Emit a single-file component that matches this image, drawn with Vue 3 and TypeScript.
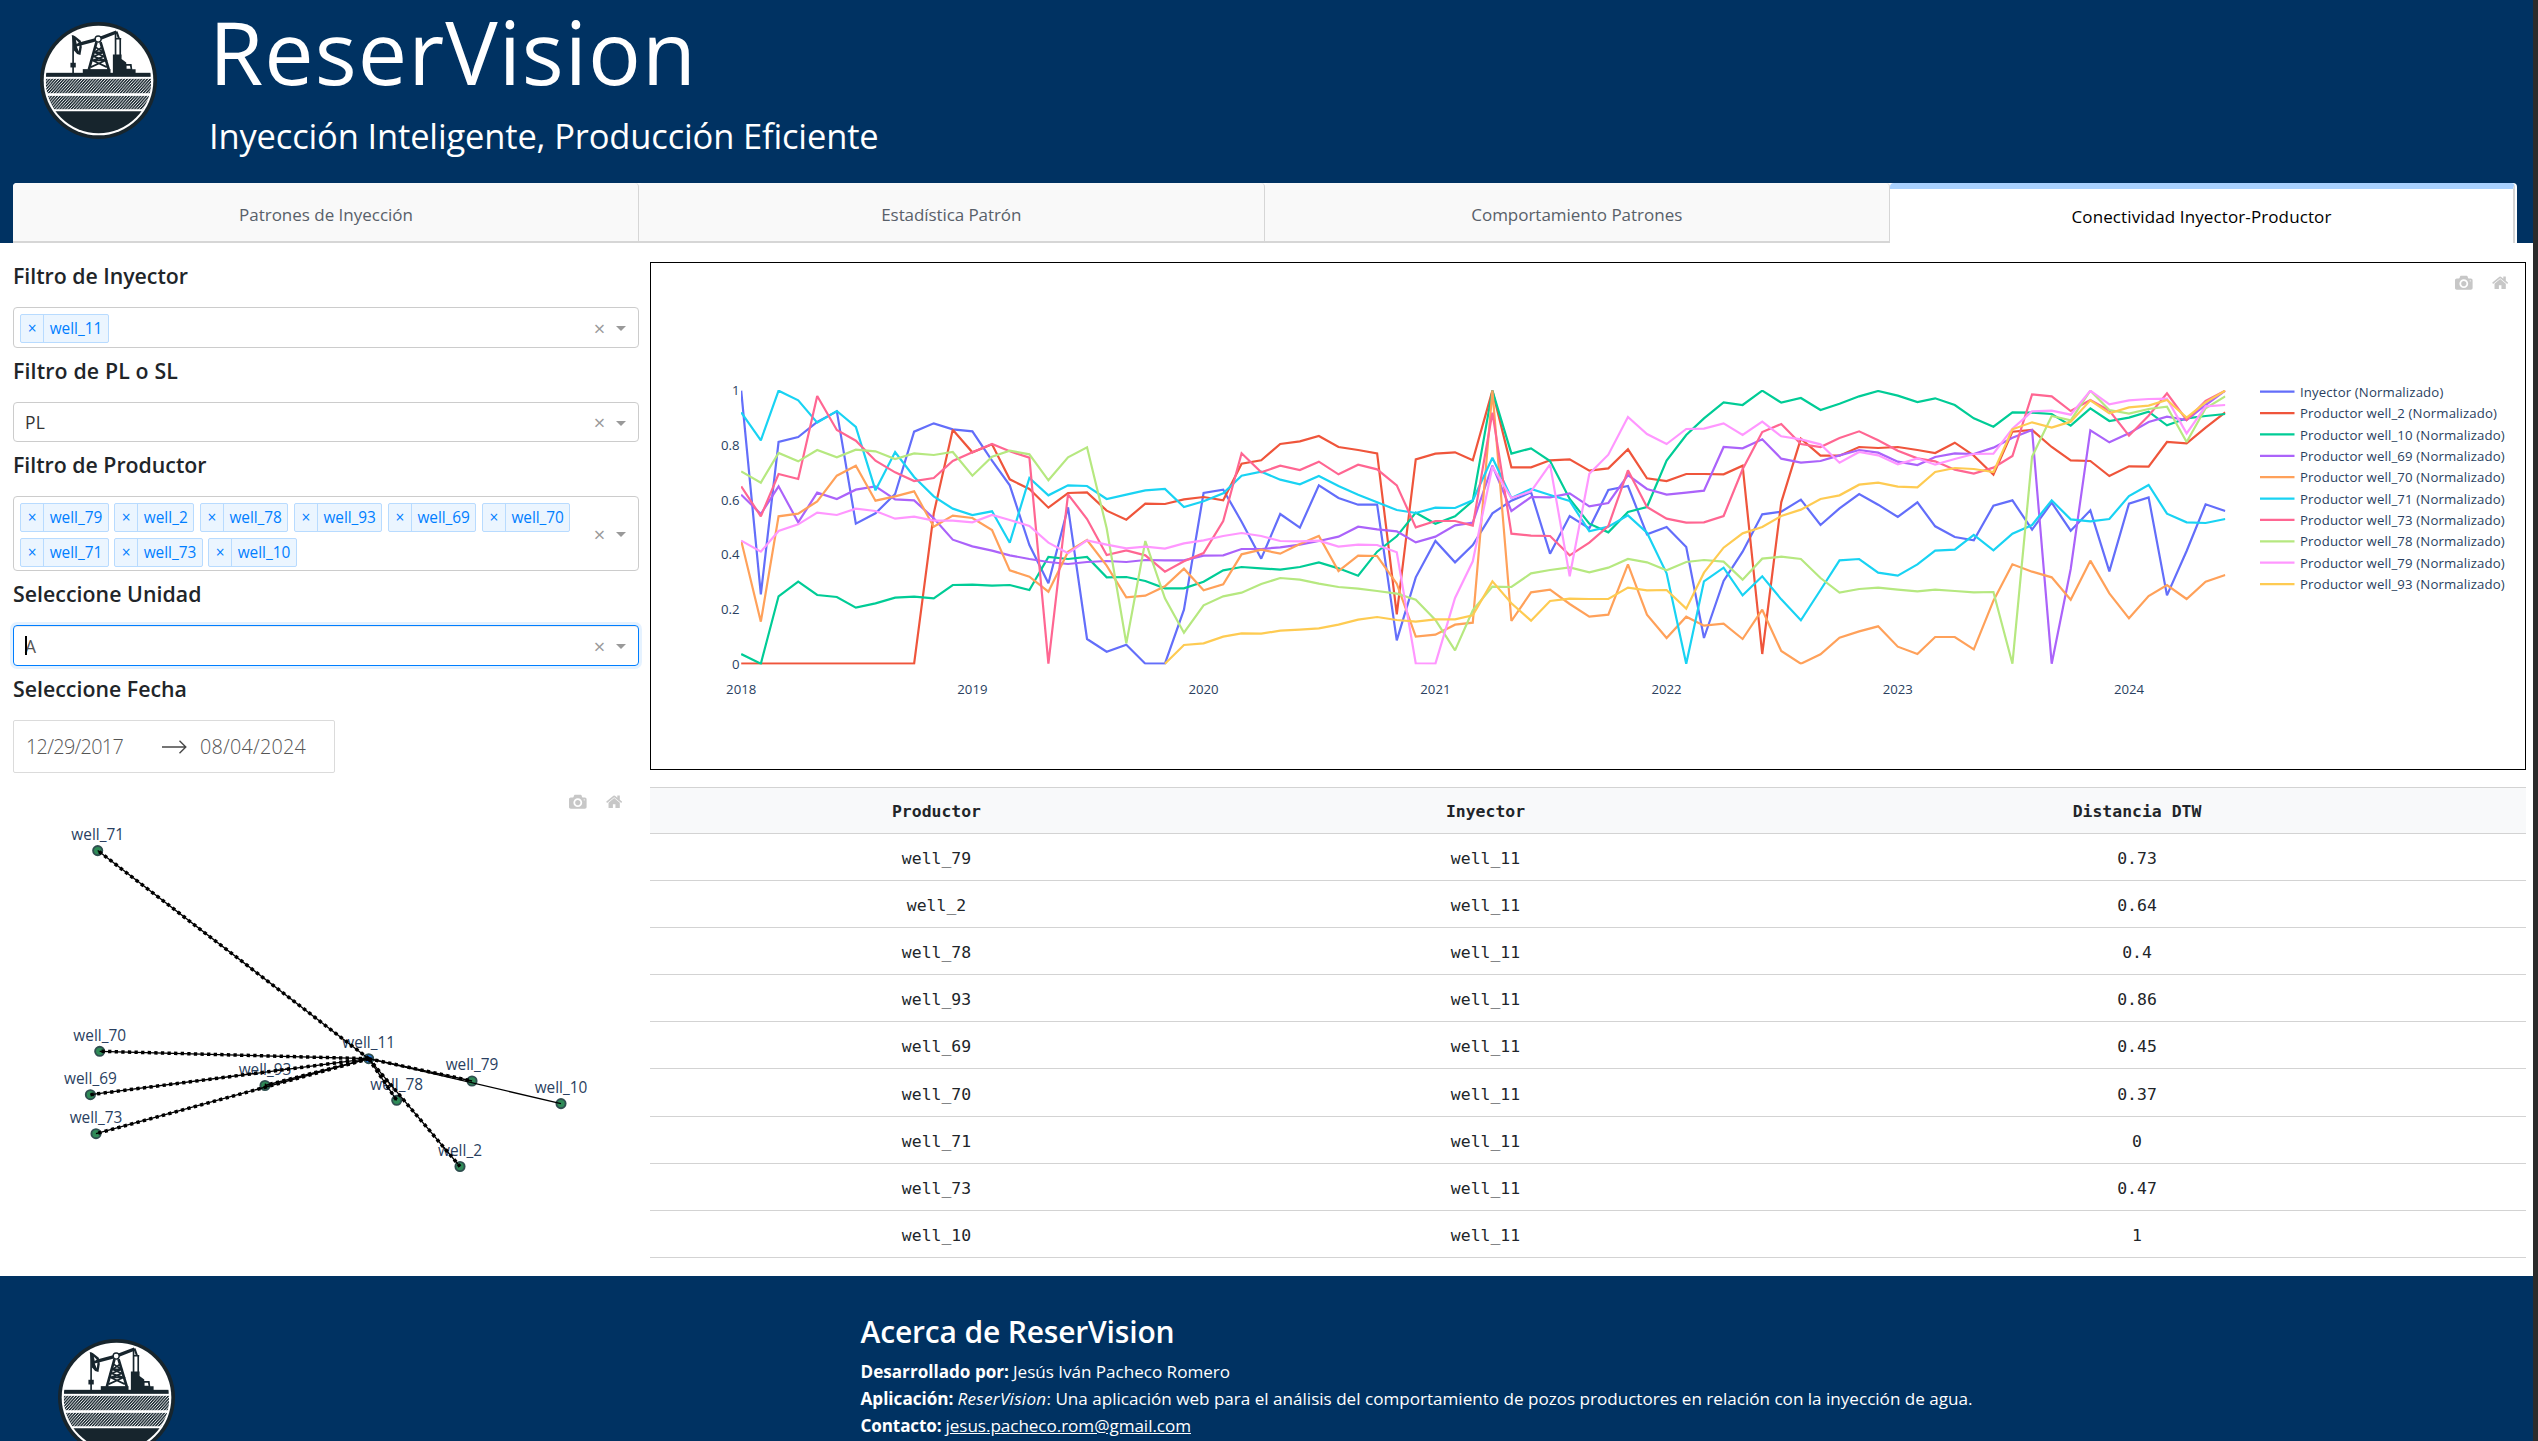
<script setup lang="ts">
import type { Directive } from 'vue'
import { defineComponent, h } from 'vue'

// Tracks a label out (or in) so that it takes the given width in pixels.
const vFit: Directive<HTMLElement, number> = {
  mounted(el, { value }) {
    const natural = el.getBoundingClientRect().width
    const count = (el.textContent ?? '').length
    el.style.letterSpacing = `${(value - natural) / count}px`
  },
}

const CAMERA =
  'm500 450c-83 0-150-67-150-150 0-83 67-150 150-150 83 0 150 67 150 150 0 83-67 150-150 150z m400 150h-120c-16 0-34 13-39 29l-31 93c-6 15-23 28-40 28h-340c-16 0-34-13-39-28l-31-94c-6-15-23-28-40-28h-120c-55 0-100-45-100-100v-450c0-55 45-100 100-100h800c55 0 100 45 100 100v450c0 55-45 100-100 100z m-400-550c-138 0-250 112-250 250 0 138 112 250 250 250 138 0 250-112 250-250 0-138-112-250-250-250z m365 380c-19 0-35 16-35 35 0 19 16 35 35 35 19 0 35-16 35-35 0-19-16-35-35-35z'
const HOME =
  'm786 296v-267q0-15-11-26t-25-10h-214v214h-143v-214h-214q-15 0-25 10t-11 26v267q0 1 0 2t0 2l321 264 321-264q1-1 1-4z m124 39l-34-41q-5-5-12-6h-2q-7 0-12 3l-386 322-386-322q-7-4-13-4-7 2-12 7l-35 41q-4 5-3 13t6 12l401 334q18 15 42 15t43-15l136-114v109q0 8 5 13t13 5h107q8 0 13-5t5-13v-227l122-102q5-5 6-12t-4-13z'

const ModeBar = defineComponent({
  setup: () => () => {
    const icon = (d: string, w: number) =>
      h('svg', { viewBox: `0 0 ${w} 1000`, height: 17.6, width: (17.6 * w) / 1000 }, [
        h('path', { d, transform: 'matrix(1 0 0 -1 0 850)', fill: 'rgba(68,68,68,.3)' }),
      ])
    return h('div', [icon(CAMERA, 1000), icon(HOME, 928.6)])
  },
})

const DARK = '#17252d'
const Logo = defineComponent({
  setup: () => () =>
    h('svg', {
      viewBox: '62 37 350 350',
      width: 117,
      height: 117,
      innerHTML: `
      <defs>
        <clipPath id="disc"><circle cx="237" cy="212" r="158"/></clipPath>
        <pattern id="hatch" width="8.6" height="8.6" patternUnits="userSpaceOnUse" patternTransform="skewX(-42)">
          <rect width="8.6" height="8.6" fill="#e4e7e8"/><rect width="5.2" height="8.6" fill="${DARK}"/>
        </pattern>
      </defs>
      <circle cx="237" cy="212" r="175" fill="${DARK}"/>
      <circle cx="237" cy="212" r="164" fill="#fff"/>
      <g clip-path="url(#disc)">
        <rect x="80" y="189" width="313" height="12" fill="${DARK}"/>
        <rect x="79" y="207" width="315" height="43" fill="url(#hatch)"/>
        <rect x="79" y="258" width="315" height="40" fill="url(#hatch)"/>
        <rect x="70" y="304" width="340" height="80" fill="${DARK}"/>
      </g>
      <g fill="none" stroke="${DARK}">
        <path d="M161 78V190" stroke-width="5"/>
        <path d="M180 103L236 88L291 67" stroke-width="10"/>
        <path d="M231 97L208 180M243 97L268 180" stroke-width="8"/>
        <path d="M228 112L252 128L222 140L258 152L214 172M248 112L225 128L253 140L219 152L262 172M224 128H252M219 152H258" stroke-width="5"/>
        <path d="M288 66V140M302 85V140M286 87H305" stroke-width="5"/>
        <path d="M291 66L298 86" stroke-width="6"/>
        <circle cx="236" cy="88" r="9" fill="#fff" stroke-width="4"/>
      </g>
      <g fill="${DARK}">
        <path d="M157 76L166 79L184 93L187 112L183 136L173 133L164 122Z"/>
        <path d="M169 90L178 98L172 103ZM172 110L180 108L178 125Z" fill="#fff"/>
        <rect x="153" y="159" width="16" height="14"/>
        <path d="M190 190V178H273V190Z"/>
        <path d="M280 190V134H306V148L320 158V163H336L338 178H348V190Z"/>
        <path d="M321 168H331L333 177H321Z" fill="#fff"/>
      </g>`,
    }),
})

const tabs = [
  { label: 'Patrones de Inyección', fit: 174 },
  { label: 'Estadística Patrón', fit: 140 },
  { label: 'Comportamiento Patrones', fit: 211 },
  { label: 'Conectividad Inyector-Productor', fit: 260 },
]

const producers = ['well_79', 'well_2', 'well_78', 'well_93', 'well_69', 'well_70', 'well_71', 'well_73', 'well_10']
const pillFit = (name: string) => (name.length === 6 ? 44.2 : 52.5)

const rows: [string, string][] = [
  ['well_79', '0.73'],
  ['well_2', '0.64'],
  ['well_78', '0.4'],
  ['well_93', '0.86'],
  ['well_69', '0.45'],
  ['well_70', '0.37'],
  ['well_71', '0'],
  ['well_73', '0.47'],
  ['well_10', '1'],
]

interface WellNode { name: string; x: number; y: number }
const hub: WellNode = { name: 'well_11', x: 368.7, y: 1058.7 }
const nodes: WellNode[] = [
  { name: 'well_79', x: 472, y: 1081 },
  { name: 'well_2', x: 460, y: 1166.5 },
  { name: 'well_78', x: 396.7, y: 1100.3 },
  { name: 'well_93', x: 265, y: 1085.5 },
  { name: 'well_69', x: 90.4, y: 1094.7 },
  { name: 'well_70', x: 99.7, y: 1051.3 },
  { name: 'well_71', x: 97.7, y: 850.6 },
  { name: 'well_73', x: 96, y: 1133.7 },
  { name: 'well_10', x: 561, y: 1103.6 },
]

// Monthly samples from January 2018, on a grid where 62 is the value 1 and 881.5 is 0.
interface Series { name: string; color: string; start: number; levels: number[] }
const series: Series[] = [
  { name: 'Inyector (Normalizado)', color: '#636efa', start: 0, levels: [
    62, 673, 216, 201, 156, 124, 461, 430, 372, 185, 160, 178,
    184, 272, 346, 525, 640, 412, 807, 845, 824, 881, 881, 719,
    369, 359, 455, 566, 432, 473, 346, 384, 404, 404, 811, 622,
    513, 577, 525, 430, 392, 367, 551, 438, 475, 360, 348, 493,
    471, 531, 804, 633, 545, 433, 425, 389, 465, 415, 372, 404,
    441, 397, 469, 501, 511, 407, 391, 479, 398, 482, 421, 604,
    401, 382, 676, 543, 403, 423] },
  { name: 'Productor well_2 (Normalizado)', color: '#EF553B', start: 0, levels: [
    881, 881, 881, 881, 881, 881, 881, 881, 881, 881, 430, 179,
    247, 223, 328, 357, 413, 369, 367, 422, 449, 401, 402, 388,
    381, 391, 281, 271, 222, 214, 198, 231, 240, 250, 733, 268,
    251, 247, 271, 62, 292, 292, 271, 268, 302, 295, 238, 325,
    333, 312, 312, 313, 287, 852, 397, 206, 257, 257, 231, 234,
    231, 240, 249, 218, 257, 314, 185, 180, 231, 271, 273, 318,
    289, 290, 216, 220, 173, 127] },
  { name: 'Productor well_10 (Normalizado)', color: '#00cc96', start: 0, levels: [
    852, 881, 679, 635, 675, 681, 713, 700, 683, 680, 685, 645,
    644, 647, 645, 660, 561, 567, 561, 622, 621, 633, 655, 655,
    635, 601, 591, 595, 599, 591, 577, 595, 617, 545, 499, 428,
    461, 439, 393, 62, 251, 235, 273, 387, 461, 487, 426, 411,
    272, 195, 145, 97, 105, 62, 98, 84, 120, 101, 79, 63,
    77, 96, 85, 105, 145, 170, 127, 128, 132, 167, 115, 153,
    143, 125, 166, 145, 138, 132] },
  { name: 'Productor well_69 (Normalizado)', color: '#ab63fa', start: 0, levels: [
    374, 432, 349, 457, 368, 387, 359, 349, 388, 391, 445, 509,
    529, 542, 556, 567, 576, 582, 576, 573, 576, 570, 571, 571,
    557, 556, 537, 537, 532, 524, 513, 500, 470, 478, 484, 517,
    500, 466, 458, 287, 423, 381, 382, 370, 409, 399, 315, 357,
    374, 368, 362, 231, 235, 208, 266, 278, 273, 256, 240, 248,
    275, 285, 261, 250, 252, 233, 203, 180, 881, 597, 181, 217,
    190, 156, 140, 150, 105, 62] },
  { name: 'Productor well_70 (Normalizado)', color: '#FFA15A', start: 0, levels: [
    512, 755, 439, 431, 394, 317, 287, 392, 379, 364, 470, 437,
    444, 480, 601, 620, 665, 545, 510, 587, 682, 677, 649, 596,
    661, 643, 553, 539, 551, 522, 498, 603, 557, 558, 641, 800,
    794, 764, 758, 62, 753, 667, 659, 702, 740, 734, 583, 734,
    804, 740, 767, 761, 807, 719, 843, 881, 853, 803, 784, 769,
    830, 852, 801, 801, 838, 692, 583, 605, 622, 689, 572, 670,
    745, 678, 645, 687, 635, 615] },
  { name: 'Productor well_71 (Normalizado)', color: '#19d3f3', start: 0, levels: [
    127, 211, 62, 91, 158, 123, 171, 361, 246, 321, 379, 416,
    435, 424, 518, 324, 376, 346, 348, 387, 374, 361, 357, 411,
    394, 370, 317, 305, 329, 343, 318, 348, 374, 397, 420, 429,
    413, 414, 391, 263, 384, 357, 375, 393, 484, 470, 436, 488,
    610, 881, 634, 593, 676, 619, 688, 751, 660, 571, 567, 608,
    617, 583, 542, 539, 495, 541, 491, 465, 391, 448, 454, 447,
    378, 345, 431, 457, 459, 447] },
  { name: 'Productor well_73 (Normalizado)', color: '#FF6692', start: 0, levels: [
    349, 439, 312, 327, 78, 180, 212, 272, 307, 333, 324, 273,
    247, 222, 244, 263, 881, 373, 447, 555, 541, 556, 605, 574,
    549, 453, 250, 307, 287, 300, 275, 313, 284, 298, 346, 472,
    453, 453, 467, 128, 491, 497, 498, 556, 518, 468, 301, 411,
    446, 458, 457, 438, 298, 186, 162, 222, 231, 204, 184, 211,
    242, 265, 274, 299, 311, 293, 258, 73, 79, 123, 90, 122,
    197, 137, 70, 150, 93, 62] },
  { name: 'Productor well_78 (Normalizado)', color: '#B6E880', start: 0, levels: [
    304, 338, 249, 274, 240, 262, 239, 244, 267, 250, 255, 246,
    317, 260, 242, 253, 331, 262, 232, 475, 820, 513, 685, 788,
    706, 679, 668, 642, 624, 629, 641, 651, 656, 663, 671, 689,
    750, 841, 721, 650, 651, 610, 600, 592, 607, 593, 567, 577,
    601, 576, 570, 575, 629, 566, 560, 567, 624, 668, 657, 653,
    659, 664, 659, 663, 667, 666, 881, 260, 138, 151, 62, 120,
    131, 117, 110, 216, 115, 79] },
  { name: 'Productor well_79 (Normalizado)', color: '#FF97FF', start: 0, levels: [
    512, 545, 483, 463, 428, 435, 416, 423, 446, 440, 452, 452,
    457, 435, 450, 468, 518, 550, 511, 524, 535, 530, 536, 520,
    511, 498, 489, 498, 513, 514, 512, 530, 524, 525, 547, 880,
    881, 684, 574, 290, 384, 364, 283, 619, 311, 254, 141, 192,
    222, 177, 176, 160, 195, 155, 199, 208, 223, 278, 246, 256,
    283, 265, 284, 267, 252, 251, 176, 124, 122, 134, 62, 103,
    91, 87, 86, 190, 109, 105] },
  { name: 'Productor well_93 (Normalizado)', color: '#FECB52', start: 22, levels: [
    881, 825,
    820, 800, 790, 791, 782, 779, 775, 764, 749, 741, 750, 755,
    748, 748, 736, 634, 700, 752, 693, 686, 687, 687, 653, 661,
    660, 716, 608, 533, 490, 471, 438, 419, 387, 376, 344, 338,
    350, 352, 306, 294, 297, 306, 178, 157, 173, 155, 91, 130,
    112, 107, 90, 143, 97, 62] },
]

const EPOCH = Date.UTC(2018, 0, 1)
const monthX = (m: number): number =>
  741.2 + ((Date.UTC(2018, m, 1) - EPOCH) / 86400000) * 0.6334
const points = (s: Series): string =>
  s.levels.map((v, i) => `${monthX(s.start + i).toFixed(2)},${(370 + v / 3).toFixed(2)}`).join(' ')

const yTicks = ['1', '0.8', '0.6', '0.4', '0.2', '0']
const years = [2018, 2019, 2020, 2021, 2022, 2023, 2024]
const legendFit = (name: string) => (name.startsWith('Iny') ? 143.3 : name.includes('well_2 ') ? 197 : 204.7)
</script>

<template>
  <div class="frame">
    <div class="page">
      <header class="header">
        <div class="brand">
          <Logo class="brand-logo" />
          <div class="brand-text">
            <div class="title"><span v-fit="488">ReserVision</span></div>
            <div class="subtitle"><span v-fit="669.5">Inyección Inteligente, Producción Eficiente</span></div>
          </div>
        </div>
        <nav class="tabs">
          <div v-for="(t, i) in tabs" :key="t.label" class="tab" :class="{ active: i === 3 }">
            <span v-fit="t.fit">{{ t.label }}</span>
          </div>
        </nav>
      </header>

      <main class="main">
        <section class="filters">
          <h5><span v-fit="175">Filtro de Inyector</span></h5>
          <div class="select">
            <div class="pills">
              <div class="pill"><i>×</i><b><span v-fit="52.5">well_11</span></b></div>
            </div>
            <span class="clear">×</span><span class="arrow"></span>
          </div>

          <h5><span v-fit="165">Filtro de PL o SL</span></h5>
          <div class="select short">
            <div class="value"><span v-fit="20">PL</span></div>
            <span class="clear">×</span><span class="arrow"></span>
          </div>

          <h5><span v-fit="193.5">Filtro de Productor</span></h5>
          <div class="select tall">
            <div class="pills">
              <div v-for="p in producers" :key="p" class="pill">
                <i>×</i><b><span v-fit="pillFit(p)">{{ p }}</span></b>
              </div>
            </div>
            <span class="clear">×</span><span class="arrow"></span>
          </div>

          <h5><span v-fit="188.5">Seleccione Unidad</span></h5>
          <div class="select focused">
            <div class="value unit"><u class="caret"></u>A</div>
            <span class="clear">×</span><span class="arrow"></span>
          </div>

          <h5><span v-fit="174">Seleccione Fecha</span></h5>
          <div class="dates">
            <div class="from"><span v-fit="97">12/29/2017</span></div>
            <svg width="26" height="16" viewBox="0 0 26 16">
              <path d="M1 8H24.5M18.5 1.8L24.8 8L18.5 14.2" fill="none" stroke="#484848" stroke-width="1.4" />
            </svg>
            <div class="to"><span v-fit="106">08/04/2024</span></div>
          </div>

          <div class="network">
            <ModeBar class="modebar" />
            <svg width="626" height="440" viewBox="13 773 626 440">
              <g class="node-label" text-anchor="middle">
                <template v-for="n in [...nodes, hub]" :key="n.name">
                  <circle :cx="n.x" :cy="n.y" r="4.6" :fill="n === hub ? '#1e6fd0' : '#2E8B57'" stroke="#2F4F4F" stroke-width="1.9" />
                  <text :x="n.x" :y="n.y - 10.6">{{ n.name }}</text>
                </template>
              </g>
              <g stroke="#000">
                <template v-for="n in nodes" :key="n.name">
                  <line :x1="hub.x" :y1="hub.y" :x2="n.x" :y2="n.y" stroke-width="1.3" />
                  <line v-if="n.name !== 'well_10'" :x1="hub.x" :y1="hub.y" :x2="n.x" :y2="n.y" stroke-width="3.5" stroke-dasharray="3.3 3.3" />
                </template>
              </g>
            </svg>
          </div>
        </section>

        <section class="results">
          <div class="chart">
            <ModeBar class="modebar" />
            <svg width="1874" height="506" viewBox="651 263 1874 506">
              <clipPath id="plot"><rect x="741" y="390" width="1484.5" height="274.6" /></clipPath>
              <g clip-path="url(#plot)" fill="none" stroke-width="2.2">
                <polyline v-for="s in series" :key="s.name" :points="points(s)" :stroke="s.color" stroke-miterlimit="2" />
              </g>
              <g class="axis" text-anchor="end">
                <text v-for="(t, i) in yTicks" :key="t" x="739.5" :y="395.4 + i * 54.62">{{ t }}</text>
              </g>
              <g class="axis" text-anchor="middle">
                <text v-for="(y, i) in years" :key="y" :x="monthX(i * 12)" y="694">{{ y }}</text>
              </g>
              <g class="axis">
                <template v-for="(s, i) in series" :key="s.name">
                  <line x1="2260" x2="2294.5" :y1="391.7 + i * 21.37" :y2="391.7 + i * 21.37" :stroke="s.color" stroke-width="2.2" />
                  <text x="2300" :y="396.8 + i * 21.37" :textLength="legendFit(s.name)">{{ s.name }}</text>
                </template>
              </g>
            </svg>
          </div>

          <table class="grid">
            <colgroup><col class="c1" /><col class="c2" /><col class="c3" /></colgroup>
            <thead>
              <tr><th>Productor</th><th>Inyector</th><th>Distancia DTW</th></tr>
            </thead>
            <tbody>
              <tr v-for="[well, d] in rows" :key="well">
                <td>{{ well }}</td><td>well_11</td><td>{{ d }}</td>
              </tr>
            </tbody>
          </table>
        </section>
      </main>

      <footer class="footer">
        <Logo class="footer-logo" />
        <div class="about">
          <h4><span v-fit="314">Acerca de ReserVision</span></h4>
          <p><strong v-fit="148.5">Desarrollado por:</strong><span class="rest" v-fit="217">Jesús Iván Pacheco Romero</span></p>
          <p><strong v-fit="93">Aplicación:</strong><em v-fit="89" class="rest">ReserVision</em><span v-fit="926">: Una aplicación web para el análisis del comportamiento de pozos productores en relación con la inyección de agua.</span></p>
          <p><strong v-fit="81">Contacto:</strong><a class="rest" v-fit="245.5">jesus.pacheco.rom@gmail.com</a></p>
        </div>
      </footer>
    </div>
    <div class="edge"></div>
  </div>
</template>

<style>
body { margin: 0; overflow: hidden; }
</style>

<style scoped>
* { box-sizing: border-box; }
.frame {
  display: flex;
  width: 2538px;
  height: 1441px;
  font-family: "Open Sans", "Noto Sans", sans-serif;
  color: #212529;
  background: #fff;
}
.page { width: 2533px; display: flex; flex-direction: column; }
.edge { width: 5px; background: #2b2b2b; }
span, strong, em, a { display: inline-block; white-space: pre; }

.header { height: 243px; background: #003262; display: flex; flex-direction: column; }
.brand { display: flex; height: 183px; color: #fff; }
.brand-logo { margin: 22px 0 0 40px; flex: none; }
.brand-text { margin-left: 52px; }
.title { height: 102px; line-height: 102px; font-size: 88px; }
.subtitle { height: 65px; line-height: 67px; font-size: 34.5px; }

.tabs { display: flex; height: 60px; width: 2504px; margin-left: 13px; padding-right: 2px; background: #fff; border-radius: 4px 4px 0 0; }
.tab {
  flex: 0 0 626px;
  display: flex;
  justify-content: center;
  align-items: center;
  padding-top: 4px;
  padding-left: 1px;
  font-size: 17px;
  color: #586069;
  background: #f9f9f9;
  border-right: 1px solid #d6d6d6;
  border-bottom: 2px solid #d6d6d6;
  border-radius: 4px 4px 0 0;
}
.tab:nth-child(2), .tab:nth-child(3) { flex-basis: 625.5px; padding-left: 0; }
.tab.active { flex: 1; background: #fff; color: #000; border-top: 6px solid #a8d1ff; border-bottom: 0; border-right-width: 2px; padding: 0; }

.main { display: flex; height: 1033px; padding: 19px 7px 0 13px; }
.filters { width: 626px; margin-right: 11px; }
h5 { margin: 0; height: 45px; line-height: 28px; font-size: 21.3px; font-weight: 600; white-space: nowrap; }
.select {
  display: flex;
  align-items: center;
  height: 41px;
  margin-bottom: 9px;
  border: 1px solid #ccc;
  border-radius: 4px;
}
.select.short { height: 40px; }
.select.tall { height: 75px; }
.select.focused { border-color: #007eff; box-shadow: 0 0 0 3px rgba(0, 126, 255, 0.1), inset 0 1px 1px rgba(0, 0, 0, 0.075); }
.pills { flex: 1; display: flex; flex-wrap: wrap; gap: 6px 5.5px; padding: 1px 0 0 6.2px; }
.tall .pills { padding-top: 2px; }
.pill {
  display: flex;
  height: 29px;
  border: 1px solid #b8dbff;
  border-radius: 2px;
  background: #ebf5ff;
  color: #007eff;
  font-size: 15.4px;
  line-height: 28px;
}
.pill i { width: 23px; text-align: center; font-style: normal; border-right: 1px solid #b8dbff; line-height: 27px; }
.pill b { font-weight: 400; padding: 0 5.5px; height: 27px; }
.value { position: relative; flex: 1; padding-left: 11px; font-size: 17.4px; line-height: 38px; color: #333; }
.unit { color: #555; }
.caret { position: absolute; left: 11px; top: 9px; width: 2px; height: 19px; background: #000; }
.clear { width: 19px; text-align: center; font-size: 20px; line-height: 30px; color: #999; margin: 2px 7px 0 0; }
.arrow { margin: 2px 12px 0 0; border: 5px solid transparent; border-top-color: #999; border-bottom: 0; }

.dates { display: flex; align-items: center; width: 322px; height: 53px; border: 1px solid #dbdbdb; border-radius: 2px; font-size: 19.8px; font-weight: 300; color: #555; }
.from { width: 147px; padding-left: 12px; line-height: 54px; }
.to { padding-left: 13px; line-height: 54px; }

.network, .chart { position: relative; }
.network svg, .chart svg { display: block; overflow: visible; }
.modebar { position: absolute; display: flex; justify-content: space-between; width: 53px; }
.network .modebar { left: 556px; top: 20px; }
.chart .modebar { left: 1804px; top: 11px; }
.node-label text { font-size: 15.4px; fill: #2a3f5f; }
.axis text { font-size: 13.2px; fill: #2a3f5f; }

.results { width: 1876px; }
.chart { width: 1876px; height: 508px; border: 1px solid #000; }
.grid { margin-top: 17px; width: 1876px; table-layout: fixed; border-collapse: collapse; font-family: "DejaVu Sans Mono", monospace; font-size: 16.45px; line-height: 20px; }
.c1 { width: 573px; }
.c2 { width: 525px; }
.c3 { width: 778px; }
.grid th { height: 46px; padding: 2px 0 0; background: #f8f9fa; border-top: 1px solid #d3d3d3; border-bottom: 1px solid #d3d3d3; }
.grid td { height: 47.1px; padding: 4px 0 0; text-align: center; border-bottom: 1px solid #d3d3d3; }

.footer { flex: 1; display: flex; height: 165px; overflow: hidden; background: #003262; color: #fff; }
.footer-logo { margin: 63px 0 0 57.5px; flex: none; }
.about { margin: 38px 0 0 686px; }
.about h4 { margin: 0; height: 43.5px; line-height: 35px; font-size: 30px; font-weight: 600; }
.about p { margin: 0; height: 27px; line-height: 27px; font-size: 17.1px; white-space: nowrap; }
.rest { margin-left: 4px; }
a { text-decoration: underline; }
</style>
